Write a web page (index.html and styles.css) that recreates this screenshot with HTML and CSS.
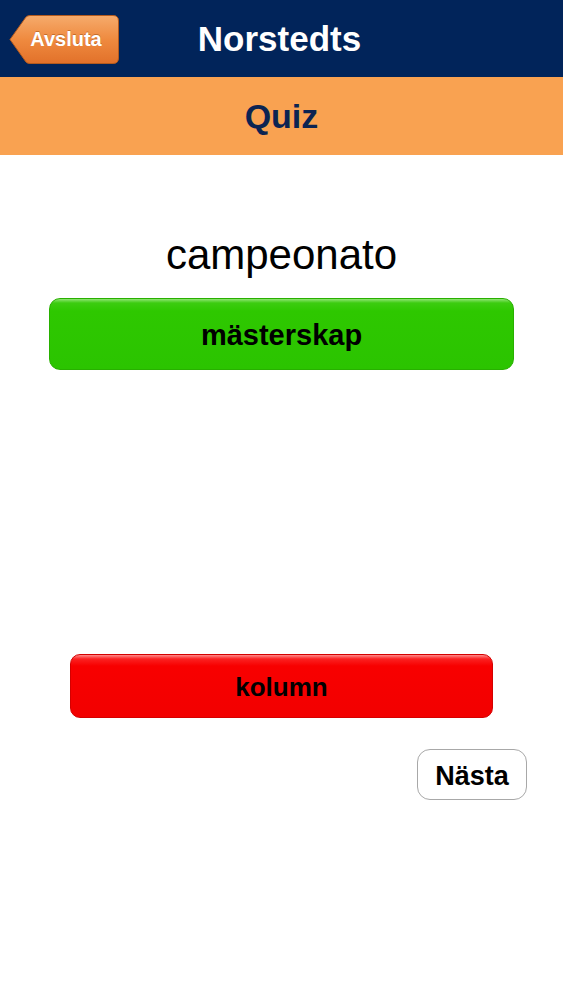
FILE: index.html
```html
<!DOCTYPE html>
<html lang="sv">
<head>
    <meta charset="UTF-8">
    <meta name="viewport" content="width=device-width, initial-scale=1.0">
    <title>Norstedts Quiz</title>
    <link rel="stylesheet" href="styles.css">
</head>
<body>
    <div class="nav-bar">
        <button class="back-btn">
            <svg class="back-shape" width="110" height="49" viewBox="0 0 110 49">
                <defs>
                    <linearGradient id="backGrad" x1="0" y1="0" x2="0" y2="1">
                        <stop offset="0" stop-color="#f6ab6c"/>
                        <stop offset="0.5" stop-color="#ef8a3f"/>
                        <stop offset="1" stop-color="#e2712a"/>
                    </linearGradient>
                </defs>
                <path d="M1 24.5 L17 2 Q18.5 0.5 21 0.5 L104 0.5 Q109.5 0.5 109.5 6 L109.5 43 Q109.5 48.5 104 48.5 L21 48.5 Q18.5 48.5 17 47 Z" fill="url(#backGrad)" stroke="#b35a1e" stroke-width="1"/>
            </svg>
            <span class="back-label">Avsluta</span>
        </button>
        <div class="nav-title">Norstedts</div>
        <div></div>
    </div>
    <div class="sub-bar">Quiz</div>

    <div class="quiz">
        <div class="word">campeonato</div>
        <div class="answer answer-right">mästerskap</div>
        <div class="answer answer-wrong">kolumn</div>
        <div class="next-row">
            <button class="next-btn">Nästa</button>
        </div>
    </div>
</body>
</html>
```

FILE: styles.css
```css
body {
    margin: 0;
    font-family: "Liberation Sans", Arial, sans-serif;
    background-color: #fff;
    width: 563px;
    height: 1000px;
    overflow: hidden;
}
.nav-bar {
    background-color: #01245a;
    height: 77px;
    display: grid;
    grid-template-columns: 1fr auto 1fr;
    align-items: center;
}
.back-btn {
    position: relative;
    width: 110px;
    height: 49px;
    margin-left: 9px;
    margin-top: 1px;
    padding: 0 0 0 4px;
    border: none;
    background: none;
    display: flex;
    align-items: center;
    justify-content: center;
    cursor: pointer;
}
.back-shape {
    position: absolute;
    left: 0;
    top: 0;
}
.back-label {
    position: relative;
    color: #fff;
    font-family: "Liberation Sans", Arial, sans-serif;
    font-weight: bold;
    font-size: 20px;
    text-shadow: 0 -1px 0 rgba(120, 50, 0, 0.4);
}
.nav-title {
    color: #fff;
    font-weight: bold;
    font-size: 35px;
    margin-right: 4px;
}
.sub-bar {
    background-color: #f9a251;
    height: 78px;
    display: flex;
    align-items: center;
    justify-content: center;
    color: #0c2452;
    font-weight: bold;
    font-size: 34px;
}
.quiz {
    display: flex;
    flex-direction: column;
    align-items: center;
}
.word {
    margin-top: 76px;
    font-size: 42px;
    line-height: 48px;
    color: #000;
}
.answer {
    display: flex;
    align-items: center;
    justify-content: center;
    font-weight: bold;
    color: #000;
    box-sizing: border-box;
}
.answer-right {
    margin-top: 19px;
    width: 465px;
    height: 72px;
    font-size: 29px;
    border-radius: 11px;
    background: linear-gradient(#8fe472 0, #3ccc10 4px, #2ec800 12px, #2bc400 100%);
    border: 1px solid #28b000;
    padding-top: 2px;
}
.answer-wrong {
    margin-top: 284px;
    width: 423px;
    height: 64px;
    font-size: 26px;
    border-radius: 10px;
    background: linear-gradient(#ff8a8a 0, #fb2020 4px, #f80000 11px, #f20000 100%);
    border: 1px solid #d40000;
    padding-top: 3px;
}
.next-row {
    width: 100%;
    display: flex;
    justify-content: flex-end;
    margin-top: 31px;
}
.next-btn {
    width: 110px;
    height: 51px;
    margin-right: 36px;
    padding-top: 4px;
    background: #fff;
    border: 1.5px solid #a8a8a8;
    border-radius: 13px;
    font-family: "Liberation Sans", Arial, sans-serif;
    font-weight: bold;
    font-size: 27px;
    color: #000;
    cursor: pointer;
}
```
